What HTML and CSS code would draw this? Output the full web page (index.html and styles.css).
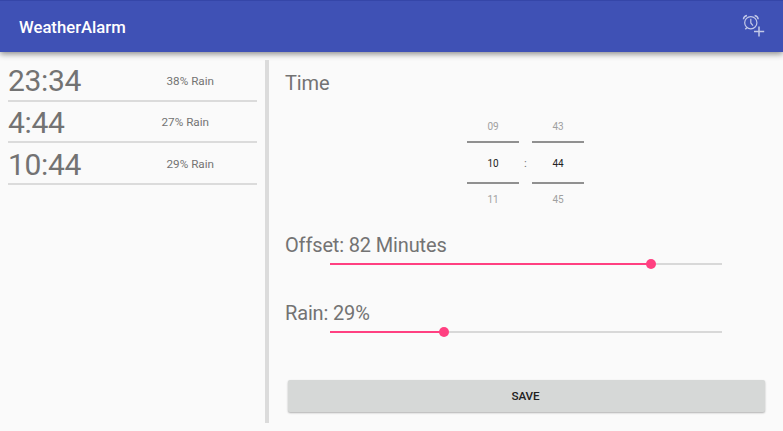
FILE: index.html
```html
<!DOCTYPE html>
<html lang="en">
<head>
<meta charset="utf-8">
<title>WeatherAlarm</title>
<link rel="stylesheet" href="styles.css">
</head>
<body>
<header class="bar">
  <h1 class="title">WeatherAlarm</h1>
  <button class="add" aria-label="Add alarm">
    <svg width="24" height="24" viewBox="0 0 24 24" fill="none" stroke="currentColor">
      <circle cx="8.8" cy="8.7" r="6.1" stroke-width="1.2"/>
      <path d="M8.8 4.8V9l2.2 2.6" stroke-width="1.2"/>
      <path d="M1.4 5.2C1.6 3.3 3 1.9 5 1.5M12.6 1.5c2 .4 3.4 1.8 3.6 3.7M4.8 13.7l-1.5 1.6" stroke-width="1.4"/>
      <path d="M17 12.5v10M12 17.5h10.2" stroke-width="1.5"/>
    </svg>
  </button>
</header>
<main class="content">
  <ul class="alarms">
    <li class="alarm"><span class="clock">23:34</span><span class="chance">38% Rain</span></li>
    <li class="alarm"><span class="clock">4:44</span><span class="chance chance-short">27% Rain</span></li>
    <li class="alarm"><span class="clock">10:44</span><span class="chance">29% Rain</span></li>
  </ul>
  <div class="divider"></div>
  <section class="editor">
    <h2 class="label label-time">Time</h2>
    <div class="picker">
      <div class="wheel"><span class="near">09</span><span class="current">10</span><span class="near">11</span></div>
      <span class="colon">:</span>
      <div class="wheel"><span class="near">43</span><span class="current">44</span><span class="near">45</span></div>
    </div>
    <h2 class="label label-offset">Offset: 82 Minutes</h2>
    <div class="slider"><div class="fill" style="width:82%"></div><div class="thumb"></div></div>
    <h2 class="label label-rain">Rain: 29%</h2>
    <div class="slider"><div class="fill" style="width:29%"></div><div class="thumb"></div></div>
    <button class="save">SAVE</button>
  </section>
</main>
</body>
</html>
```
FILE: styles.css
```css
* { box-sizing: border-box; }
body {
  margin: 0;
  height: 431px;
  overflow: hidden;
  background: #fafafa;
  color: #737373;
  font-family: Roboto, sans-serif;
}
button { border: 0; padding: 0; font-family: inherit; }
.bar {
  display: flex;
  align-items: center;
  justify-content: space-between;
  height: 52px;
  padding: 2px 17px 0 19px;
  background: #3f51b5;
  border-top: 1px solid #3546a8;
  box-shadow: 0 2px 6px rgba(0, 0, 0, .45);
}
.title { margin: 0; color: #fff; font-size: 16.7px; font-weight: 500; line-height: 24px; }
.add { width: 24px; height: 24px; margin-bottom: 3px; background: none; color: #c3c9e8; }
.add svg { display: block; }
.content { display: flex; height: 379px; padding: 8px 18px 8px 8px; }
.alarms { width: 249px; margin: 0; padding: 0; list-style: none; }
.alarm {
  display: flex;
  align-items: center;
  height: 41.67px;
  border-bottom: 2px solid #dbdbdb;
}
.clock { font-size: 30px; line-height: 40px; letter-spacing: -.35px; padding-top: 3px; }
.chance { margin-left: auto; margin-right: 43px; padding-top: 2px; font-size: 11.7px; line-height: 14px; }
.chance-short { margin-right: 48px; }
.divider { width: 4px; margin: 0 16px 0 8px; background: #dbdbdb; }
.editor { display: flex; flex-direction: column; flex: 1; }
.label { margin: 0; font-size: 20px; font-weight: 400; line-height: 24px; letter-spacing: -.15px; }
.label-time { margin-top: 11px; }
.picker {
  display: flex;
  align-items: center;
  justify-content: center;
  gap: 5px;
  height: 110px;
  margin: 13px 0 0;
  padding-left: 1px;
  font-size: 10px;
}
.wheel { width: 52px; text-align: center; }
.near { display: block; line-height: 30px; color: #a0a0a0; }
.current {
  display: block;
  height: 43px;
  margin: -1px 0 1px;
  line-height: 41px;
  color: #222;
  border: solid #909090;
  border-width: 2px 0;
}
.colon { width: 3px; font-size: 11.7px; }
.slider { display: flex; align-items: center; height: 10px; margin: 2px 43px 0 45px; background: linear-gradient(#d8d8d8, #d8d8d8) center / 100% 2px no-repeat; }
.fill { height: 2px; background: #ff4081; }
.thumb { width: 10px; height: 10px; margin-left: -5px; border-radius: 50%; background: #ff4081; }
.label-offset { margin-top: 15px; }
.label-rain { margin-top: 32px; }
.save {
  height: 32px;
  margin: 43px 0 0 3px;
  padding: 0 2px 1px 0;
  border-radius: 2px;
  background: #d6d8d7;
  box-shadow: 0 1px 2px rgba(0, 0, 0, .3);
  color: #212121;
  font-size: 11.7px;
  font-weight: 500;
  letter-spacing: -.15px;
}
```
